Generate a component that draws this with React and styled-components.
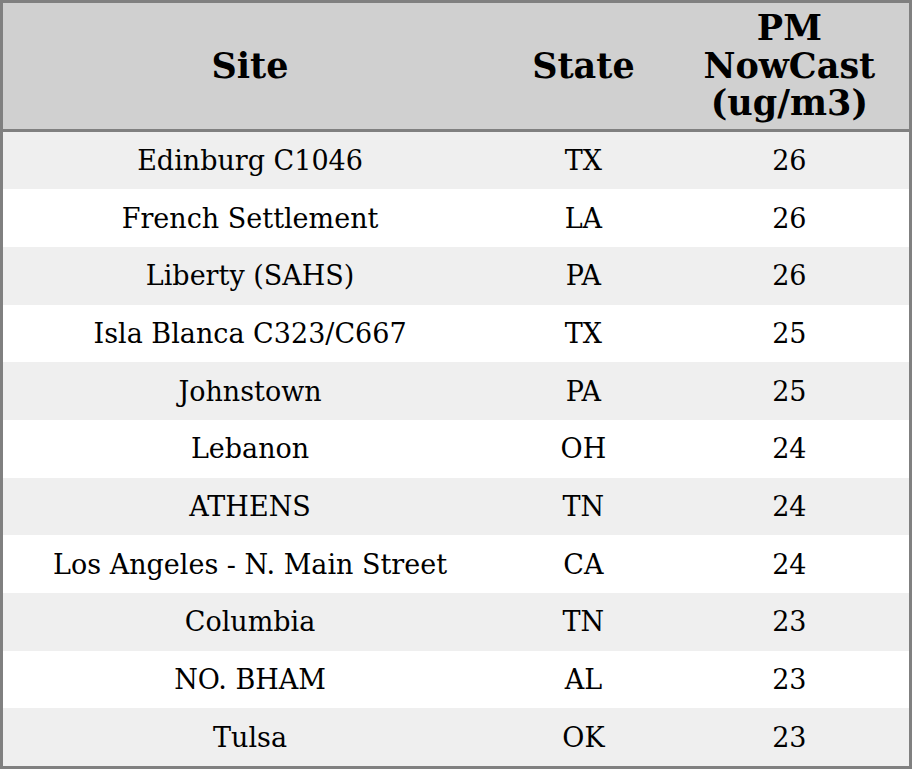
import React from "react";
import styled, { createGlobalStyle } from "styled-components";

const GlobalStyle = createGlobalStyle`
  html, body {
    margin: 0;
    padding: 0;
    background: white;
  }
`;

const Table = styled.table`
  width: 912px;
  height: 769px;
  border-collapse: collapse;
  table-layout: fixed;
  border: 3px solid #808080;
  font-family: "DejaVu Serif", serif;
  color: #000;
`;

const HeadCell = styled.th`
  background: #d0d0d0;
  font-size: 35px;
  font-weight: bold;
  line-height: 37.5px;
  padding: 6px 4px 7px;
  text-align: center;
  border-bottom: 3px solid #808080;
  height: 112px;
  box-sizing: content-box;
`;

const Row = styled.tr`
  background: ${(p) => (p.$odd ? "#efefef" : "#ffffff")};
`;

const Cell = styled.td`
  font-size: 27px;
  text-align: center;
  padding: 0 4px;
  height: 57.7px;
`;

const rows = [
  ["Edinburg C1046", "TX", 26],
  ["French Settlement", "LA", 26],
  ["Liberty (SAHS)", "PA", 26],
  ["Isla Blanca C323/C667", "TX", 25],
  ["Johnstown", "PA", 25],
  ["Lebanon", "OH", 24],
  ["ATHENS", "TN", 24],
  ["Los Angeles - N. Main Street", "CA", 24],
  ["Columbia", "TN", 23],
  ["NO. BHAM", "AL", 23],
  ["Tulsa", "OK", 23],
];

export default function App() {
  return (
    <>
      <GlobalStyle />
      <Table>
        <colgroup>
          <col style={{ width: 494 }} />
          <col style={{ width: 172 }} />
          <col style={{ width: 240 }} />
        </colgroup>
        <thead>
          <tr>
            <HeadCell>Site</HeadCell>
            <HeadCell>State</HeadCell>
            <HeadCell>
              PM
              <br />
              NowCast
              <br />
              (ug/m3)
            </HeadCell>
          </tr>
        </thead>
        <tbody>
          {rows.map((r, i) => (
            <Row key={i} $odd={i % 2 === 0}>
              <Cell>{r[0]}</Cell>
              <Cell>{r[1]}</Cell>
              <Cell>{r[2]}</Cell>
            </Row>
          ))}
        </tbody>
      </Table>
    </>
  );
}
